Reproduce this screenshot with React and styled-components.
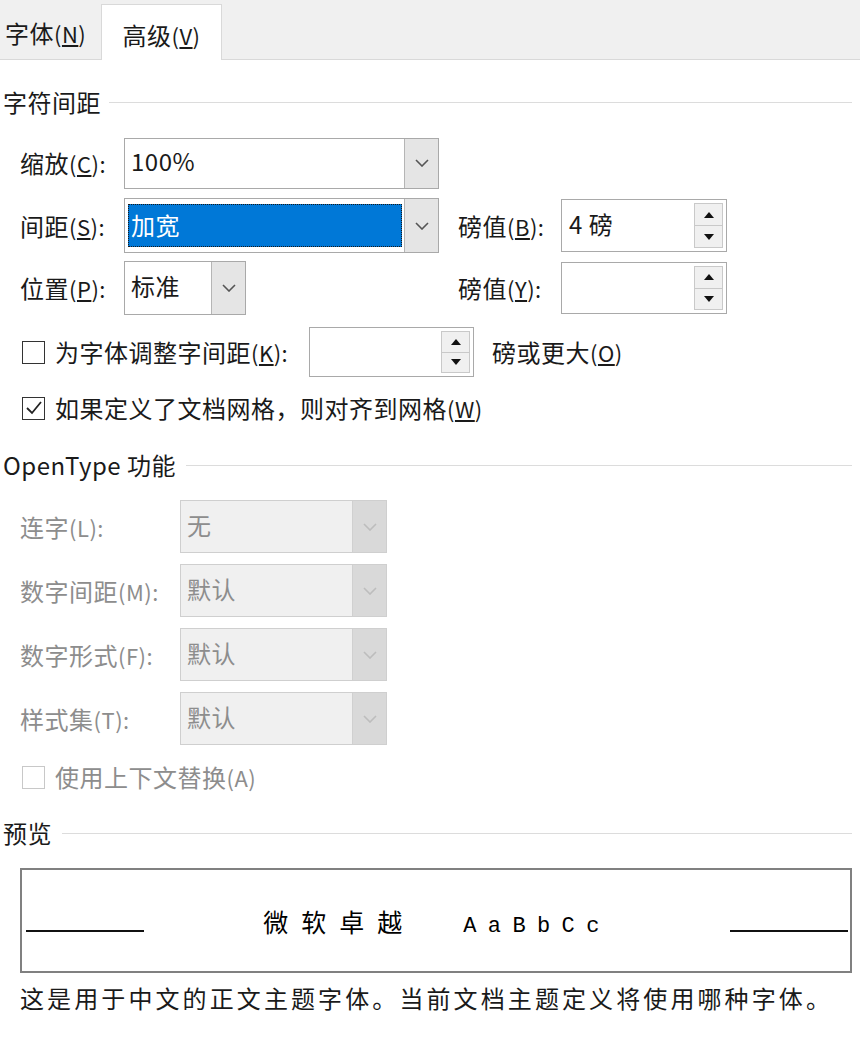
import React from "react";
import styled, { createGlobalStyle, css } from "styled-components";

const GlobalStyle = createGlobalStyle`
  html, body { margin: 0; padding: 0; background: #fff; }
  body {
    width: 860px;
    height: 1048px;
    overflow: hidden;
    font-family: "Noto Sans CJK SC", "Noto Sans", sans-serif;
    font-size: 24px;
    letter-spacing: 0.5px;
    color: #1a1a1a;
  }
  * { box-sizing: border-box; }
`;

/* Latin mnemonic suffix */
const Mn = styled.span`
  font-size: 22px;
  letter-spacing: 0.5px;
`;

const TabBar = styled.div`
  display: flex;
  align-items: flex-end;
  height: 60px;
  background: #f0f0f0;
  border-bottom: 1px solid #d9d9d9;
`;

const Tab = styled.div`
  display: flex;
  align-items: center;
  line-height: 1;
  ${(p) =>
    p.$active
      ? css`
          margin-left: 3px;
          width: 121px;
          height: 56px;
          margin-bottom: -1px;
          justify-content: center;
          padding-top: 5px;
          background: #fff;
          border: 1px solid #d9d9d9;
          border-bottom: none;
        `
      : css`
          width: 98px;
          height: 50px;
          padding-left: 5px;
          padding-bottom: 2px;
        `}
`;

const Main = styled.div`
  padding-right: 8px;
`;

const SectionHeader = styled.div`
  display: flex;
  align-items: center;
  height: 30px;
  padding-left: 3px;
  margin-top: ${(p) => p.$mt}px;
  line-height: 1;
`;

const HeaderTitle = styled.span`
  white-space: pre;
`;

const HeaderLine = styled.div`
  flex: 1;
  height: 1px;
  background: #dcdcdc;
  margin-left: ${(p) => p.$gap || 8}px;
`;

const CharGrid = styled.div`
  display: grid;
  grid-template-columns: 104px 315px 19px 103px 166px;
  grid-auto-rows: 52px;
  row-gap: 10.5px;
  align-items: center;
  margin-top: 20px;
  padding-left: 20px;
`;

const Label = styled.div`
  line-height: 1;
  white-space: nowrap;
  color: ${(p) => (p.$disabled ? "#8d8d8d" : "#1a1a1a")};
`;

const ComboBox = styled.div`
  display: flex;
  width: ${(p) => p.$w}px;
  height: ${(p) => p.$h || 52}px;
  border: 1px solid ${(p) => (p.$disabled ? "#cfcfcf" : "#a9a9a9")};
  background: ${(p) => (p.$disabled ? "#f0f0f0" : "#fff")};
`;

const ComboValue = styled.div`
  flex: 1;
  display: flex;
  align-items: center;
  padding-left: 6px;
  padding-bottom: 4px;
  line-height: 1;
  color: ${(p) => (p.$disabled ? "#8d8d8d" : "#1a1a1a")};
  ${(p) =>
    p.$selected &&
    css`
      margin: 5px 2px 5px 3px;
      padding-left: 3px;
      padding-bottom: 2px;
      background: #0078d7;
      color: #fff;
      outline: 1px dotted #1a1a1a;
      outline-offset: -1px;
    `}
`;

const ComboButton = styled.div`
  width: 34px;
  display: flex;
  align-items: center;
  justify-content: center;
  background: ${(p) => (p.$disabled ? "#d9d9d9" : "#e5e5e5")};
  border-left: 1px solid ${(p) => (p.$disabled ? "#d0d0d0" : "#b5b5b5")};
`;

const SpinBox = styled.div`
  display: flex;
  width: ${(p) => p.$w || 166}px;
  height: ${(p) => p.$h || 52}px;
  border: 1px solid #a9a9a9;
  background: #fff;
`;

const SpinValue = styled.div`
  flex: 1;
  display: flex;
  align-items: center;
  padding-left: 7px;
  padding-bottom: 4px;
  line-height: 1;
`;

const SpinButtons = styled.div`
  display: flex;
  flex-direction: column;
  width: 29px;
  margin: 3px 3px 3px 0;
`;

const SpinButton = styled.div`
  flex: 1;
  display: flex;
  align-items: center;
  justify-content: center;
  background: #f0f0f0;
  border: 1px solid #c9c9c9;
  & + & { border-top: none; }
`;

const CheckRow = styled.div`
  display: flex;
  align-items: center;
  height: ${(p) => p.$h || 30}px;
  margin-top: ${(p) => p.$mt}px;
  padding-left: 22px;
`;

const CheckBox = styled.div`
  width: 23px;
  height: 23px;
  flex: none;
  display: flex;
  align-items: center;
  justify-content: center;
  border: 1.5px solid ${(p) => (p.$disabled ? "#c8c8c8" : "#333")};
  background: #fff;
`;

const CheckText = styled.div`
  margin-left: 10px;
  line-height: 1;
  white-space: nowrap;
  width: ${(p) => (p.$w ? `${p.$w}px` : "auto")};
  color: ${(p) => (p.$disabled ? "#8d8d8d" : "#1a1a1a")};
`;

const TrailText = styled.div`
  margin-left: 18px;
  line-height: 1;
  white-space: nowrap;
`;

const OTGrid = styled.div`
  display: grid;
  grid-template-columns: 160px 207px;
  grid-auto-rows: 53px;
  row-gap: 11px;
  align-items: center;
  margin-top: 20px;
  padding-left: 20px;
`;

const PreviewBox = styled.div`
  display: flex;
  align-items: baseline;
  margin: 20px 0 0 20px;
  width: 832px;
  height: 105px;
  padding: 36px 2px 0 4px;
  border: 2px solid #808080;
`;

const PreviewLine = styled.div`
  width: 118px;
  height: 2px;
  background: #111;
`;

const PreviewText = styled.div`
  flex: 1;
  text-align: center;
  line-height: 30px;
  white-space: nowrap;
`;

const PreviewCJK = styled.span`
  font-family: "Noto Sans CJK SC", sans-serif;
  font-size: 25px;
  font-weight: 400;
  letter-spacing: 13px;
  color: #000;
`;

const PreviewLatin = styled.span`
  font-family: "Liberation Mono", monospace;
  font-size: 22px;
  letter-spacing: 11.4px;
  margin-left: 48px;
  color: #000;
`;

const Description = styled.div`
  display: flex;
  align-items: center;
  height: 30px;
  margin-top: 10px;
  padding-left: 20px;
  line-height: 1;
  letter-spacing: 3.1px;
`;

const Chevron = ({ disabled }) => (
  <svg width="14" height="8" viewBox="0 0 14 8">
    <polyline
      points="1,1 7,7 13,1"
      fill="none"
      stroke={disabled ? "#bdbdbd" : "#555"}
      strokeWidth="1.6"
    />
  </svg>
);

const Tri = ({ up }) => (
  <svg width="10" height="6" viewBox="0 0 10 6">
    <polygon points={up ? "0,6 5,0 10,6" : "0,0 10,0 5,6"} fill="#111" />
  </svg>
);

const Combo = ({ w, h, value, selected, disabled }) => (
  <ComboBox $w={w} $h={h} $disabled={disabled}>
    <ComboValue $selected={selected} $disabled={disabled}>
      {value}
    </ComboValue>
    <ComboButton $disabled={disabled}>
      <Chevron disabled={disabled} />
    </ComboButton>
  </ComboBox>
);

const Spin = ({ w, h, value }) => (
  <SpinBox $w={w} $h={h}>
    <SpinValue>{value}</SpinValue>
    <SpinButtons>
      <SpinButton>
        <Tri up />
      </SpinButton>
      <SpinButton>
        <Tri />
      </SpinButton>
    </SpinButtons>
  </SpinBox>
);

const Check = ({ checked, disabled }) => (
  <CheckBox $disabled={disabled}>
    {checked && (
      <svg width="18" height="16" viewBox="0 0 18 16">
        <polyline
          points="2,8 7,13 16,2"
          fill="none"
          stroke="#222"
          strokeWidth="1.8"
        />
      </svg>
    )}
  </CheckBox>
);

/* text with underlined mnemonic key, e.g. 缩放(C): */
const Key = ({ text, k, colon, plain }) => (
  <>
    {text}
    <Mn>
      ({plain ? k : <u>{k}</u>}){colon ? ":" : ""}
    </Mn>
  </>
);

const otRows = [
  ["连字", "L", "无"],
  ["数字间距", "M", "默认"],
  ["数字形式", "F", "默认"],
  ["样式集", "T", "默认"],
];

export default function App() {
  return (
    <>
      <GlobalStyle />
      <TabBar>
        <Tab>
          <Key text="字体" k="N" />
        </Tab>
        <Tab $active>
          <Key text="高级" k="V" />
        </Tab>
      </TabBar>
      <Main>
        <SectionHeader $mt={27}>
          <HeaderTitle>字符间距</HeaderTitle>
          <HeaderLine />
        </SectionHeader>
        <CharGrid>
          <Label>
            <Key text="缩放" k="C" colon />
          </Label>
          <Combo w={315} h={51} value="100%" />
          <span />
          <span />
          <span />

          <Label>
            <Key text="间距" k="S" colon />
          </Label>
          <Combo w={315} h={55} value="加宽" selected />
          <span />
          <Label>
            <Key text="磅值" k="B" colon />
          </Label>
          <Spin value="4 磅" h={53} />

          <Label>
            <Key text="位置" k="P" colon />
          </Label>
          <Combo w={122} h={54} value="标准" />
          <span />
          <Label>
            <Key text="磅值" k="Y" colon />
          </Label>
          <Spin value="" h={52} />
        </CharGrid>

        <CheckRow $h={50} $mt={13}>
          <Check />
          <CheckText $w={254}>
            <Key text="为字体调整字间距" k="K" colon />
          </CheckText>
          <Spin w={165} h={50} value="" />
          <TrailText>
            <Key text="磅或更大" k="O" />
          </TrailText>
        </CheckRow>
        <CheckRow $mt={16}>
          <Check checked />
          <CheckText>
            <Key text="如果定义了文档网格，则对齐到网格" k="W" />
          </CheckText>
        </CheckRow>

        <SectionHeader $mt={27}>
          <HeaderTitle>OpenType 功能</HeaderTitle>
          <HeaderLine $gap={10} />
        </SectionHeader>
        <OTGrid>
          {otRows.map(([label, k, value]) => (
            <React.Fragment key={label}>
              <Label $disabled>
                <Key text={label} k={k} colon plain />
              </Label>
              <Combo w={207} h={53} value={value} disabled />
            </React.Fragment>
          ))}
        </OTGrid>
        <CheckRow $mt={17}>
          <Check disabled />
          <CheckText $disabled>
            <Key text="使用上下文替换" k="A" plain />
          </CheckText>
        </CheckRow>

        <SectionHeader $mt={26}>
          <HeaderTitle>预览</HeaderTitle>
          <HeaderLine $gap={10} />
        </SectionHeader>
      </Main>
      <PreviewBox>
        <PreviewLine />
        <PreviewText>
          <PreviewCJK>微软卓越</PreviewCJK>
          <PreviewLatin>AaBbCc</PreviewLatin>
        </PreviewText>
        <PreviewLine />
      </PreviewBox>
      <Description>
        这是用于中文的正文主题字体。当前文档主题定义将使用哪种字体。
      </Description>
    </>
  );
}
